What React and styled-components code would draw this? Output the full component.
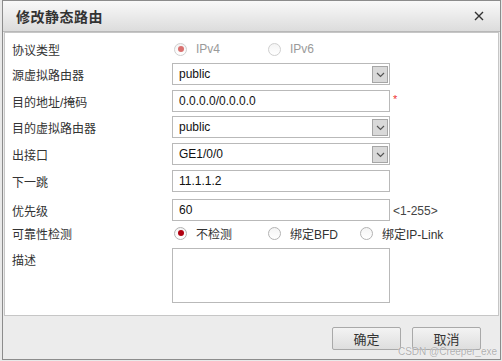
import React from "react";
import styled, { createGlobalStyle } from "styled-components";

const GlobalStyle = createGlobalStyle`
  html, body {
    margin: 0;
    padding: 0;
    background: #e9e9e9;
  }
  body {
    font-family: "Liberation Sans", "Noto Sans CJK SC", sans-serif;
    font-size: 12px;
    color: #333;
  }
`;

const Dialog = styled.div`
  position: relative;
  margin-left: 2px;
  width: 497px;
  height: 358px;
  border: 1px solid #8c8c8c;
  background: #ececec;
  display: flex;
  flex-direction: column;
`;

const TitleBar = styled.div`
  height: 30px;
  display: flex;
  align-items: center;
  justify-content: space-between;
  padding: 0 15px 0 13px;
  background: linear-gradient(#f9f9f9, #dcdcdc);
  border-bottom: 1px solid #b8b8b8;
`;

const Title = styled.div`
  font-size: 14px;
  font-weight: bold;
  letter-spacing: 0.5px;
  color: #333;
`;

const Close = styled.div`
  width: 12px;
  height: 12px;
  display: flex;
  align-items: center;
  justify-content: center;
`;

const Panel = styled.div`
  margin: 0 1px;
  height: 284px;
  background: #fff;
  border: 1px solid #c6c6c6;
  padding: 5px 0 0 7px;
  box-sizing: border-box;
`;

const Row = styled.div`
  display: flex;
  align-items: ${(p) => (p.$top ? "flex-start" : "center")};
  height: ${(p) => p.$h || 22}px;
  margin-top: ${(p) => p.$mt || 0}px;
`;

const Label = styled.div`
  width: 160px;
  font-size: 12px;
  color: #333;
  padding-top: ${(p) => (p.$top ? 3 : 0)}px;
`;

const Field = styled.div`
  position: relative;
  width: 218px;
  height: 22px;
  box-sizing: border-box;
  border: 1px solid #b9b9b9;
  background: #fff;
  display: flex;
  align-items: center;
  padding-left: 6px;
  font-size: 12px;
  color: #111;
`;

const ArrowBtn = styled.div`
  position: absolute;
  right: 1px;
  top: 2px;
  width: 16px;
  height: 17px;
  box-sizing: border-box;
  border: 1px solid #a6a6a6;
  background: #d9d9d9;
  display: flex;
  align-items: center;
  justify-content: center;
`;

const TextArea = styled.div`
  width: 218px;
  height: 55px;
  box-sizing: border-box;
  border: 1px solid #b9b9b9;
  background: #fff;
`;

const Note = styled.span`
  margin-left: 3px;
  font-size: ${(p) => (p.$red ? 11 : 12)}px;
  color: ${(p) => (p.$red ? "#e33" : "#444")};
  align-self: ${(p) => (p.$red ? "flex-start" : "center")};
  margin-top: ${(p) => (p.$red ? 3 : 2)}px;
`;

const RadioGroup = styled.div`
  display: flex;
  align-items: center;
`;

const RadioItem = styled.label`
  display: flex;
  align-items: center;
  width: ${(p) => p.$w}px;
  font-size: 12px;
  color: ${(p) => (p.$disabled ? "#9a9a9a" : "#333")};
`;

const Circle = styled.span`
  width: 13px;
  height: 13px;
  box-sizing: border-box;
  border-radius: 50%;
  border: 1px solid ${(p) => (p.$disabled ? "#cfcfcf" : "#b3b3b3")};
  background: linear-gradient(#f4f4f4, #ffffff);
  display: flex;
  align-items: center;
  justify-content: center;
  margin: 0 9px 0 2px;
`;

const Dot = styled.span`
  width: 6px;
  height: 6px;
  border-radius: 50%;
  background: ${(p) => (p.$disabled ? "#d9706f" : "#b00010")};
`;

const Footer = styled.div`
  flex: 1;
  display: flex;
  justify-content: flex-end;
  align-items: flex-start;
  gap: 11px;
  padding: 11px 19px 0 0;
`;

const Button = styled.div`
  width: 69px;
  height: 23px;
  box-sizing: border-box;
  border: 1px solid #a9a9a9;
  border-radius: 2px;
  background: linear-gradient(#f3f3f3, #dedede);
  display: flex;
  align-items: center;
  justify-content: center;
  font-size: 13px;
  color: #333;
`;

const Watermark = styled.div`
  position: absolute;
  right: 3px;
  bottom: 2px;
  font-size: 10px;
  color: rgba(150, 150, 150, 0.75);
  text-shadow: 0 0 1px #fff;
`;

const Chevron = () => (
  <svg width="9" height="6" viewBox="0 0 9 6">
    <path d="M1 1 L4.5 4.5 L8 1" fill="none" stroke="#555" strokeWidth="1.2" />
  </svg>
);

const Radio = ({ label, checked, disabled, w }) => (
  <RadioItem $disabled={disabled} $w={w}>
    <Circle $disabled={disabled}>{checked && <Dot $disabled={disabled} />}</Circle>
    {label}
  </RadioItem>
);

const Select = ({ value }) => (
  <Field>
    {value}
    <ArrowBtn>
      <Chevron />
    </ArrowBtn>
  </Field>
);

export default function App() {
  return (
    <>
      <GlobalStyle />
      <Dialog>
        <TitleBar>
          <Title>修改静态路由</Title>
          <Close>
            <svg width="10" height="10" viewBox="0 0 10 10">
              <path d="M1 1 L9 9 M9 1 L1 9" stroke="#333" strokeWidth="1.4" />
            </svg>
          </Close>
        </TitleBar>
        <Panel>
          <Row>
            <Label>协议类型</Label>
            <RadioGroup>
              <Radio label="IPv4" checked disabled w={94} />
              <Radio label="IPv6" disabled w={80} />
            </RadioGroup>
          </Row>
          <Row $mt={3}>
            <Label>源虚拟路由器</Label>
            <Select value="public" />
          </Row>
          <Row $mt={5}>
            <Label>目的地址/掩码</Label>
            <Field>0.0.0.0/0.0.0.0</Field>
            <Note $red>*</Note>
          </Row>
          <Row $mt={4}>
            <Label>目的虚拟路由器</Label>
            <Select value="public" />
          </Row>
          <Row $mt={5}>
            <Label>出接口</Label>
            <Select value="GE1/0/0" />
          </Row>
          <Row $mt={5}>
            <Label>下一跳</Label>
            <Field>11.1.1.2</Field>
          </Row>
          <Row $mt={7}>
            <Label>优先级</Label>
            <Field>60</Field>
            <Note>&lt;1-255&gt;</Note>
          </Row>
          <Row $mt={2} $h={20}>
            <Label>可靠性检测</Label>
            <RadioGroup>
              <Radio label="不检测" checked w={94} />
              <Radio label="绑定BFD" w={92} />
              <Radio label="绑定IP-Link" w={100} />
            </RadioGroup>
          </Row>
          <Row $mt={5} $h={55} $top>
            <Label $top>描述</Label>
            <TextArea />
          </Row>
        </Panel>
        <Footer>
          <Button>确定</Button>
          <Button>取消</Button>
        </Footer>
        <Watermark>CSDN @Creeper_exe</Watermark>
      </Dialog>
    </>
  );
}
